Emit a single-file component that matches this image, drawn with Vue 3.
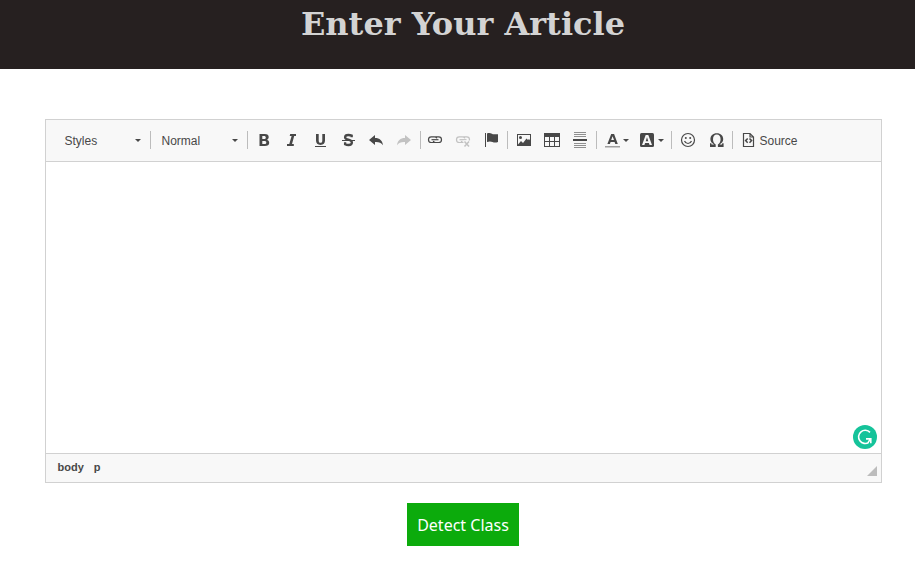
<script setup>
const basic = ['bold', 'italic', 'underline', 'strike', 'undo', 'redo']
const links = ['link', 'unlink', 'anchor']
const inserts = ['image', 'table', 'rule']
</script>

<template>
  <div class="page">
    <header class="banner"><h1>Enter Your Article</h1></header>
    <main>
      <section class="editor">
        <div class="toolbar">
          <button class="combo styles"><span>Styles</span><i class="caret"></i></button>
          <span class="sep"></span>
          <button class="combo"><span>Normal</span><i class="caret"></i></button>
          <span class="sep"></span>
          <div class="group">
            <button v-for="name in basic" :key="name" class="tool" :aria-label="name">
              <svg v-if="name === 'bold'" viewBox="0 0 16 16"><path fill-rule="evenodd" d="M3.500 2h5.300c2.700 0 3.900 1 3.900 3 0 1.600-.7 2.400-1.900 2.800 1.500.4 2.400 1.400 2.400 3 0 2.200-1.500 3.200-4.400 3.200H3.500zM6.300 4v3h1.500c1.400 0 2-.5 2-1.500S9.200 4 7.800 4zm0 5v3h2c1.400 0 2-.5 2-1.500S9.700 9 8.300 9z" /></svg>
              <svg v-else-if="name === 'italic'" viewBox="0 0 16 16"><path d="M6.200 2H12v2h-1.800L8 12h1.800v2H3v-2h2.300l2.300-8H5.700z" /></svg>
              <svg v-else-if="name === 'underline'" viewBox="0 0 16 16"><path d="M4 2h2.700v6.500c0 1.500.5 2.300 1.800 2.300s1.800-.8 1.800-2.300V2H13v6.600c0 2.800-1.500 4.300-4.500 4.300S4 11.400 4 8.600zM3 14h11v1H3z" /></svg>
              <svg v-else-if="name === 'strike'" viewBox="0 0 16 16"><path d="M2 8.500h13" stroke="#484848" stroke-width="1" /><path d="M11.700 5.300V3.600c-1-.4-2-.6-3.300-.6-2.200 0-3.300.8-3.300 2.200 0 1.700 1.400 2 3.300 2.500 2.400.7 3.500 1.200 3.500 2.800 0 1.700-1.400 2.500-3.500 2.500-1.400 0-2.300-.3-3.300-.8v-2" fill="none" stroke="#484848" stroke-width="2.300" /></svg>
              <svg v-else-if="name === 'undo'" viewBox="0 0 16 16"><path d="M1 8 7 3v3c4.700 0 7.500 2.600 8 7.300-1.800-2.600-4.200-3.400-8-3.200V13z" /></svg>
              <svg v-else class="faded" viewBox="0 0 16 16"><path d="M15 8 9 3v3C4.300 6 1.500 8.600 1 13.300c1.800-2.600 4.200-3.400 8-3.200V13z" /></svg>
            </button>
          </div>
          <span class="sep"></span>
          <div class="group links">
            <button v-for="name in links" :key="name" class="tool" :aria-label="name">
              <svg v-if="name !== 'anchor'" :class="{ faded: name === 'unlink' }" viewBox="0 0 16 16">
                <path class="outline" d="M7.500 10.500H4.300a2.800 2.800 0 0 1 0-5.600h3.200c1.200 0 2 .5 2.300 1.500M8.500 4.900h3.200a2.800 2.800 0 0 1 0 5.600H8.500c-1.200 0-2-.5-2.300-1.500" />
                <path class="outline" d="M4.500 7.700h7" />
                <g v-if="name === 'unlink'"><path d="M8.500 8.500H16v6H8.500z" class="blank" /><path class="cross" d="m9.500 9.500 4.500 5m0-5-4.500 5" /></g>
              </svg>
              <svg v-else viewBox="0 0 16 16"><path d="M2 1h1v14H2zM4 1.500c1.600-.7 3.200-.6 5 .2.600.4 1 .6 1.500.6H15V10c-2.100.8-3.800.8-5.500 0-1.700-.8-3.500-.8-5.500 0z" /></svg>
            </button>
          </div>
          <span class="sep"></span>
          <div class="group">
            <button v-for="name in inserts" :key="name" class="tool" :aria-label="name">
              <svg v-if="name === 'image'" viewBox="0 0 16 16"><path fill-rule="evenodd" d="M1 2h14v12H1zm1 1v9.500L5 9l2 2 3.500-4.500L12 8l1-1 1 1.300V3z" /><circle cx="4.500" cy="5.500" r="1.500" /></svg>
              <svg v-else-if="name === 'table'" viewBox="0 0 16 16"><path fill-rule="evenodd" d="M0 1h16v14H0zM1 5v4h4V5zm5 0v4h4V5zm5 0v4h4V5zM1 10v4h4v-4zm5 0v4h4v-4zm5 0v4h4v-4z" /></svg>
              <svg v-else viewBox="0 0 16 16"><path fill="#909090" d="M2 0h12v1H2zm0 2h12v1H2zm0 2h12v1H2zm0 7h12v1H2zm0 2h12v1H2zm0 2h12v1H2z" /><path d="M1 7h14v2H1z" /></svg>
            </button>
          </div>
          <span class="sep"></span>
          <div class="group colors">
            <button class="tool color" aria-label="text color">
              <svg viewBox="0 0 16 16"><path fill-rule="evenodd" d="M6.200 2h2.900l3.700 10h-2.500l-.7-2H5.600l-.7 2H2.400zm0 6H9L7.600 4.200z" /><path fill="#a0a0a0" d="M0 14h15v1.500H0z" /></svg>
              <i class="caret"></i>
            </button>
            <button class="tool color background" aria-label="background color">
              <svg viewBox="0 0 16 16"><rect x="1" y="1" width="14" height="14" rx="1.500" /><path fill="#f8f8f8" fill-rule="evenodd" d="M6.700 3h2.600l3.700 10h-2.400l-.7-2H6.100l-.7 2H3zm0 6.200h2.600L8 5.200z" /></svg>
              <i class="caret"></i>
            </button>
          </div>
          <span class="sep"></span>
          <div class="group">
            <button class="tool" aria-label="smiley">
              <svg viewBox="0 0 16 16"><circle class="outline" cx="8" cy="8" r="6.500" /><circle cx="5.800" cy="6" r="1" /><circle cx="10.200" cy="6" r="1" /><path class="outline" d="M4.500 9c1.400 3.300 5.600 3.300 7 0" /></svg>
            </button>
            <button class="tool" aria-label="special character">
              <svg viewBox="0 0 16 16"><path d="M2 11.300h1.300l.3 1.300h2.500C3.600 11 2.400 9.500 2.400 7.300c0-3.600 2.500-6 6.400-6s6.400 2.400 6.400 6c0 2.200-1.200 3.700-3.700 5.300h2.500l.3-1.300h1.300V15H9.900v-2.500c1.900-1.300 2.700-3 2.700-5.200 0-2.900-1.500-4.700-3.800-4.700S5 4.400 5 7.300c0 2.200.8 3.900 2.700 5.200V15H2z" /></svg>
            </button>
          </div>
          <span class="sep"></span>
          <button class="source">
            <svg viewBox="0 0 16 16"><path class="outline" d="M2.500 1.500h6.500l3.500 3.500v9.500h-10zM9 1.500V5h3.500" /><path class="mark" d="M6.700 6.500 4.600 8.600l2.100 2.100m1.800-4.200 2.100 2.100-2.100 2.100" /></svg>
            <span>Source</span>
          </button>
        </div>
        <div class="content">
          <svg class="assistant" viewBox="0 0 24 24">
            <circle cx="12" cy="12" r="12" fill="#15c39a" />
            <path d="M17 7.400A6.600 6.600 0 1 0 15.800 17.400M13 13.900h5M17.800 13v5.300M17.800 14l-2.600 3" fill="none" stroke="#fff" stroke-width="1.600" />
          </svg>
        </div>
        <footer class="status">
          <span>body</span><span>p</span>
          <svg class="grip" viewBox="0 0 10 10"><path d="M10 0v10H0z" /></svg>
        </footer>
      </section>
      <button class="detect">Detect Class</button>
    </main>
  </div>
</template>

<style>
body { margin: 0; background: #fff; }
</style>

<style scoped>
* { box-sizing: border-box; }
button { border: 0; padding: 0; background: none; color: inherit; font: inherit; }
.banner { height: 69px; background: #262020; padding-top: 6px; padding-left: 11px; text-align: center; }
h1 { margin: 0; font: bold 32px/37px "DejaVu Serif", serif; color: #d3d3d3; }
main { display: flex; flex-direction: column; align-items: center; padding: 50px 34px 0 45px; }
.editor { width: 837px; height: 364px; display: flex; flex-direction: column; border: 1px solid #d1d1d1; align-self: flex-start; }
.toolbar { height: 42px; display: flex; align-items: center; padding: 0 0 1px 7px; background: #f8f8f8; border-bottom: 1px solid #d1d1d1; color: #484848; font: 12px/18px "Liberation Sans", Arial, sans-serif; }
.combo { width: 92px; height: 28px; display: flex; align-items: center; justify-content: space-between; padding: 2px 7px 0 8.5px; }
.combo.styles { width: 95px; padding-left: 11.5px; }
.caret { width: 0; height: 0; border: 3px solid transparent; border-top-color: #484848; border-bottom: 0; }
.combo .caret { margin-top: -1px; }
.sep { width: 1px; height: 18px; margin: 0 2px; background: #bcbcbc; }
.group { display: flex; }
.group.links { margin-left: -2px; }
.group.colors { padding-right: 2px; }
.tool { width: 28px; height: 28px; display: flex; align-items: center; justify-content: center; }
.tool svg, .source svg { width: 16px; height: 16px; flex: none; fill: #484848; }
.color { width: 34px; justify-content: flex-start; padding-left: 6px; }
.color .caret { margin: 1px 0 0 2px; }
.background .caret { margin-left: 3px; }
.toolbar .outline { fill: none; stroke: #484848; stroke-width: 1.200; }
.mark, .cross { fill: none; stroke: #484848; stroke-width: 1.500; }
.blank { fill: #f8f8f8; }
.faded { opacity: .3; }
.source { display: flex; align-items: center; padding-left: 6px; gap: 2.5px; }
.source span { padding-top: 2px; }
.content { flex: 1; display: flex; justify-content: flex-end; align-items: flex-end; padding: 4px; background: #fff; }
.assistant { width: 24px; height: 24px; }
.status { height: 29px; display: flex; align-items: center; gap: 10px; padding: 0 4px 1px 11.5px; background: #f8f8f8; border-top: 1px solid #d1d1d1; color: #484848; font: bold 11px/15px "Liberation Sans", Arial, sans-serif; }
.grip { width: 10px; height: 10px; margin-left: auto; align-self: flex-end; margin-bottom: 5px; fill: #bcbcbc; }
.detect { width: 112px; height: 43px; margin: 20px 1px 0 0; padding-left: 1px; background: #0cab0c; color: #fff; font: 16px/22px "Noto Sans", sans-serif; }
</style>
